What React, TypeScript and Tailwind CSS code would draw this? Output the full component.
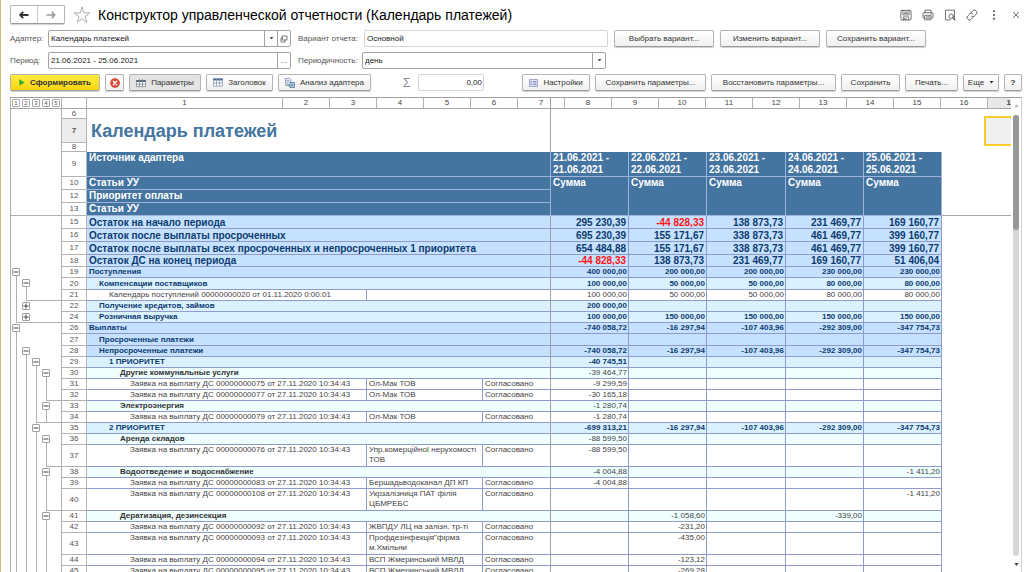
import type { ReactNode } from "react";

type Kind = "total" | "root" | "group" | "sub" | "item";

interface Row {
  n: number;
  h: string;
  kind: Kind;
  indent: 0 | 1 | 2 | 3 | 4;
  text: string;
  tree: string;
  end?: number;
  partner?: string;
  status?: string;
  split?: boolean;
  v: string[];
}

const H11 = "h-[11px]";
const H12 = "h-[12px]";
const H13 = "h-[13px]";
const H22 = "h-[22px]";
const AGREED = "Согласовано";

const order = (id: string) => `Заявка на выплату ДС 00000000${id} от 27.11.2020 10:34:43`;

/* tree: one character per outline level: "-" open node, "+" closed node, "|" running line */
const rows: Row[] = [
  { n: 15, h: H13, kind: "total", indent: 0, tree: "", text: "Остаток на начало периода", v: ["295 230,39", "-44 828,33", "138 873,73", "231 469,77", "169 160,77"] },
  { n: 16, h: H13, kind: "total", indent: 0, tree: "", text: "Остаток после выплаты просроченных", v: ["695 230,39", "155 171,67", "338 873,73", "461 469,77", "399 160,77"] },
  { n: 17, h: H13, kind: "total", indent: 0, tree: "", text: "Остаток после выплаты всех просроченных и непросроченных 1 приоритета", v: ["654 484,88", "155 171,67", "338 873,73", "461 469,77", "399 160,77"] },
  { n: 18, h: H12, kind: "total", indent: 0, tree: "", text: "Остаток ДС на конец периода", v: ["-44 828,33", "138 873,73", "231 469,77", "169 160,77", "51 406,04"] },
  { n: 19, h: H11, kind: "root", indent: 0, tree: "-", text: "Поступления", v: ["400 000,00", "200 000,00", "200 000,00", "230 000,00", "230 000,00"] },
  { n: 20, h: H12, kind: "group", indent: 1, tree: "|-", text: "Компенсации поставщиков", v: ["100 000,00", "50 000,00", "50 000,00", "80 000,00", "80 000,00"] },
  { n: 21, h: H11, kind: "item", indent: 2, tree: "||", end: 1, split: true, text: "Календарь поступлений 00000000020 от 01.11.2020 0:00:01", v: ["100 000,00", "50 000,00", "50 000,00", "80 000,00", "80 000,00"] },
  { n: 22, h: H11, kind: "group", indent: 1, tree: "|+", text: "Получение кредитов, займов", v: ["200 000,00", "", "", "", ""] },
  { n: 24, h: H11, kind: "group", indent: 1, tree: "|+", end: 0, text: "Розничная выручка", v: ["100 000,00", "150 000,00", "150 000,00", "150 000,00", "150 000,00"] },
  { n: 26, h: H11, kind: "root", indent: 0, tree: "-", text: "Выплаты", v: ["-740 058,72", "-16 297,94", "-107 403,96", "-292 309,00", "-347 754,73"] },
  { n: 27, h: H12, kind: "root", indent: 1, tree: "|", text: "Просроченные платежи", v: ["", "", "", "", ""] },
  { n: 28, h: H11, kind: "root", indent: 1, tree: "|-", text: "Непросроченные платежи", v: ["-740 058,72", "-16 297,94", "-107 403,96", "-292 309,00", "-347 754,73"] },
  { n: 29, h: H11, kind: "group", indent: 2, tree: "||-", text: "1 ПРИОРИТЕТ", v: ["-40 745,51", "", "", "", ""] },
  { n: 30, h: H11, kind: "sub", indent: 3, tree: "|||-", text: "Другие коммунальные услуги", v: ["-39 464,77", "", "", "", ""] },
  { n: 31, h: H11, kind: "item", indent: 4, tree: "||||", text: order("075"), partner: "Ол-Мак ТОВ", status: AGREED, v: ["-9 299,59", "", "", "", ""] },
  { n: 32, h: H11, kind: "item", indent: 4, tree: "||||", end: 3, text: order("077"), partner: "Ол-Мак ТОВ", status: AGREED, v: ["-30 165,18", "", "", "", ""] },
  { n: 33, h: H11, kind: "sub", indent: 3, tree: "|||-", text: "Электроэнергия", v: ["-1 280,74", "", "", "", ""] },
  { n: 34, h: H11, kind: "item", indent: 4, tree: "||||", end: 2, text: order("079"), partner: "Ол-Мак ТОВ", status: AGREED, v: ["-1 280,74", "", "", "", ""] },
  { n: 35, h: H11, kind: "group", indent: 2, tree: "||-", text: "2 ПРИОРИТЕТ", v: ["-699 313,21", "-16 297,94", "-107 403,96", "-292 309,00", "-347 754,73"] },
  { n: 36, h: H11, kind: "sub", indent: 3, tree: "|||-", text: "Аренда складов", v: ["-88 599,50", "", "", "", ""] },
  { n: 37, h: H22, kind: "item", indent: 4, tree: "||||", end: 3, text: order("076"), partner: "Упр.комерційної нерухомості ТОВ", status: AGREED, v: ["-88 599,50", "", "", "", ""] },
  { n: 38, h: H11, kind: "sub", indent: 3, tree: "|||-", text: "Водоотведение и водоснабжение", v: ["-4 004,88", "", "", "", "-1 411,20"] },
  { n: 39, h: H11, kind: "item", indent: 4, tree: "||||", text: order("083"), partner: "Бершадьводоканал ДП КП", status: AGREED, v: ["-4 004,88", "", "", "", ""] },
  { n: 40, h: H22, kind: "item", indent: 4, tree: "||||", end: 3, text: order("108"), partner: "Укрзалізниця ПАТ філія ЦБМРЕБС", status: AGREED, v: ["", "", "", "", "-1 411,20"] },
  { n: 41, h: H11, kind: "sub", indent: 3, tree: "|||-", text: "Дератизация, дезинсекция", v: ["", "-1 058,60", "", "-339,00", ""] },
  { n: 42, h: H11, kind: "item", indent: 4, tree: "||||", text: order("092"), partner: "ЖВПДУ ЛЦ на залізн. тр-ті", status: AGREED, v: ["", "-231,20", "", "", ""] },
  { n: 43, h: H22, kind: "item", indent: 4, tree: "||||", text: order("093"), partner: 'Профдезінфекція"фірма м.Хмільни', status: AGREED, v: ["", "-435,00", "", "", ""] },
  { n: 44, h: H11, kind: "item", indent: 4, tree: "||||", text: order("094"), partner: "ВСП Жмеринський МВЛД", status: AGREED, v: ["", "-123,12", "", "", ""] },
  { n: 45, h: H11, kind: "item", indent: 4, tree: "||||", text: order("095"), partner: "ВСП Жмеринський МВЛД", status: AGREED, v: ["", "-269,28", "", "", ""] },
];

const fill: Record<Kind, string> = {
  total: "bg-[#c5e1ff]",
  root: "bg-[#c5e1ff]",
  group: "bg-[#daf1ff]",
  sub: "bg-[#efffff]",
  item: "bg-white",
};

const labelStyle: Record<Kind, string> = {
  total: "text-[10px] font-bold text-[#0d3b70]",
  root: "text-[8px] font-bold text-[#0d3b70]",
  group: "text-[8px] font-bold text-[#0d3b70]",
  sub: "text-[8px] font-bold text-[#333333]",
  item: "text-[8px] text-[#444444]",
};

const valueStyle: Record<Kind, string> = {
  ...labelStyle,
  sub: "text-[8px] text-[#444444]",
};

const indents = ["pl-[2px]", "pl-[12px]", "pl-[22px]", "pl-[33px]", "pl-[43px]"];
const treeEnds = ["ml-[5px]", "ml-[15px]", "ml-[25px]", "ml-[35px]"];
const dates = ["21.06.2021", "22.06.2021", "23.06.2021", "24.06.2021", "25.06.2021"];

/* ---------- icons ---------- */

function Svg({ size = "size-3", children, box = 16 }: { size?: string; children: ReactNode; box?: number }) {
  return (
    <svg className={`${size} shrink-0`} viewBox={`0 0 ${box} ${box}`} fill="none" stroke="currentColor" strokeLinecap="round" strokeLinejoin="round" aria-hidden="true">
      {children}
    </svg>
  );
}

const ArrowLeftIcon = () => (
  <Svg><path d="M14 8H3M7 3.8 2.8 8 7 12.2" strokeWidth="2.4" strokeLinecap="butt" /></Svg>
);
const ArrowRightIcon = () => (
  <Svg><path d="M2 8h11M9 3.8 13.2 8 9 12.2" strokeWidth="2" strokeLinecap="butt" /></Svg>
);
const StarIcon = () => (
  <Svg size="size-[18px]" box={18}><path d="M9 1.3l1.9 5.6h5.9l-4.8 3.6 1.8 5.8L9 12.8l-4.8 3.5L6 10.5 1.2 6.9h5.9z" strokeWidth="0.8" /></Svg>
);
const SaveIcon = () => (
  <Svg>
    <rect x="1.2" y="1.8" width="13.6" height="12.8" rx="1.2" strokeWidth="1.1" />
    <path d="M3.800 2v6h8.400V2M5.500 4h5M5.500 6h5M4.500 14.500v-4h7v4M6.200 12.500v1.800M8 12.500v1.800" strokeWidth="1" />
  </Svg>
);
const PrintIcon = () => (
  <Svg>
    <path d="M4 5V1.500h8V5M4 12H2.600A1.300 1.300 0 0 1 1.300 10.700V6.300A1.300 1.300 0 0 1 2.600 5h10.800a1.300 1.300 0 0 1 1.300 1.300v4.400a1.300 1.300 0 0 1-1.300 1.300H12" strokeWidth="1.1" />
    <path d="M4 8.500h8v6H4zM5.800 10.500h4.400M5.800 12.500h4.400M12 6.800h.8" strokeWidth="1" />
  </Svg>
);
const PreviewIcon = () => (
  <Svg>
    <path d="M8.500 14.500H2V1.500h12V14" strokeWidth="1.1" />
    <circle cx="9.600" cy="9.600" r="3" strokeWidth="1.100" />
    <path d="m11.900 11.900 2.800 2.800" strokeWidth="1.400" />
  </Svg>
);
const LinkIcon = () => (
  <Svg>
    <g strokeWidth="1.2">
      <path d="M6.800 4.700 9.300 2.200a2.700 2.700 0 0 1 3.900 0l.6.6a2.700 2.700 0 0 1 0 3.900L11 9.500a2.700 2.700 0 0 1-3.900 0" />
      <path d="M9.200 11.300 6.700 13.800a2.700 2.700 0 0 1-3.900 0l-.6-.6a2.700 2.700 0 0 1 0-3.900L5 6.500a2.700 2.700 0 0 1 3.900 0" />
    </g>
  </Svg>
);
const DotsIcon = () => (
  <Svg>
    <g fill="currentColor" stroke="none">
      <circle cx="8" cy="3" r="1.400" /><circle cx="8" cy="8" r="1.400" /><circle cx="8" cy="13" r="1.400" />
    </g>
  </Svg>
);
const CloseIcon = () => (
  <Svg><path d="M4.500 4.500l7 7M11.500 4.500l-7 7" strokeWidth="1.200" /></Svg>
);
const CaretIcon = () => (
  <svg className="h-[3px] w-[5px] shrink-0" viewBox="0 0 5 3" fill="currentColor" aria-hidden="true"><path d="M0.500 0h4L2.500 2.500z" /></svg>
);
const OpenIcon = () => (
  <Svg size="size-2"><path d="M5 2h9v8H5zM5 6H2v8h8v-4" strokeWidth="1.500" /></Svg>
);
const PlayIcon = () => (
  <svg className="h-[7px] w-[6px] shrink-0" viewBox="0 0 6 7" aria-hidden="true"><path d="M0.300 0.300 5.700 3.500 0.300 6.700z" fill="#2fae2f" /></svg>
);
const StopIcon = () => (
  <svg className="size-[10px] shrink-0" viewBox="0 0 10 10" aria-hidden="true">
    <circle cx="5" cy="5" r="4.600" fill="#e0493a" stroke="#c03a2e" strokeWidth="0.500" />
    <path d="M3.300 3.300l3.400 3.400M6.700 3.300 3.300 6.700" stroke="#fff" strokeWidth="1.300" strokeLinecap="round" />
  </svg>
);
const ParamsIcon = () => (
  <svg className="h-[10px] w-[10px] shrink-0" viewBox="0 0 11 10" aria-hidden="true">
    <path d="M0.500 2.500h10v6.500h-10z" fill="#fff" stroke="#7c8794" strokeWidth="0.800" />
    <path d="M0.200 1.800h10.600v2H0.200z" fill="#56616e" />
    <path d="M3.800 0.300v9M7.200 0.300v9M0.500 6.300h10" stroke="#7c8794" strokeWidth="0.900" />
  </svg>
);
const HeaderIcon = () => (
  <svg className="h-[9px] w-[10px] shrink-0" viewBox="0 0 11 9" aria-hidden="true">
    <path d="M0.500 0.500h10v8h-10z" fill="#fff" stroke="#7d8fae" strokeWidth="0.800" />
    <path d="M0.200 0.200h10.600v2H0.200z" fill="#4a6690" />
    <path d="M3.800 0.500v8M7.200 0.500v8M0.500 5h10" stroke="#7d8fae" strokeWidth="0.800" />
  </svg>
);
const AnalysisIcon = () => (
  <svg className="size-[10px] shrink-0" viewBox="0 0 10 10" aria-hidden="true">
    <path d="M0.500 0.500h4.200l1.300 1.300v5.700h-5.500z" fill="#e6eef8" stroke="#7189ad" strokeWidth="0.700" />
    <path d="M1.500 2.500h3M1.500 4h3" stroke="#7189ad" strokeWidth="0.600" />
    <path d="M1.800 5.500 5 8.300" stroke="#3d8a4e" strokeWidth="1" />
    <path d="M5 4.500h4.500v5H5z" fill="#c9dcf2" stroke="#3f639a" strokeWidth="0.700" />
    <path d="M6 6.200h2.500M6 7.800h2.500" stroke="#3f639a" strokeWidth="0.700" />
  </svg>
);
const SettingsIcon = () => (
  <svg className="h-[8px] w-[9px] shrink-0" viewBox="0 0 9 8" aria-hidden="true">
    <path d="M0.500 0.500h8v7h-8z" fill="#dfe5f5" stroke="#8b96bd" strokeWidth="0.800" />
    <path d="M1.700 2.800h1.500M1.700 5.200h1.500M4.300 2.800h3M4.300 5.200h3" stroke="#5c6fa8" strokeWidth="1" />
  </svg>
);

/* ---------- controls ---------- */

const buttonBase =
  "flex h-[17px] items-center justify-center gap-[5px] rounded-[2px] border border-[#b4b4b4] border-b-[#9c9c9c] whitespace-nowrap text-[8px] leading-none text-[#333333] shadow-[0_1px_1px_#cfcfcf]";

function Button({ className, children, tone = "bg-linear-to-b from-white to-[#f0f0f0]", label }: { className: string; children: ReactNode; tone?: string; label?: string }) {
  return (
    <button type="button" aria-label={label} className={`${buttonBase} ${tone} ${className}`}>
      {children}
    </button>
  );
}

const fieldBox = "flex h-[17px] overflow-hidden rounded-[2px] border border-[#a3a3a3] bg-white";
const fieldText = "min-w-0 flex-1 appearance-none bg-transparent px-[2px] text-[8px] text-[#222222] outline-none";
const fieldButton = "flex w-[13px] items-center justify-center border-l border-[#a3a3a3] text-[8px] text-[#555555]";

function TitleBar() {
  return (
    <header className="flex h-[19px] items-center">
      <div className="flex h-[19px] w-[55px] rounded-[2px] border border-[#b4b4b4] border-b-[#9c9c9c] shadow-[0_1px_1px_#cfcfcf]">
        <button type="button" aria-label="Назад" className="flex flex-1 items-center justify-center border-r border-[#c8c8c8] text-[#333333]"><ArrowLeftIcon /></button>
        <button type="button" aria-label="Вперед" className="flex flex-1 items-center justify-center text-[#999999]"><ArrowRightIcon /></button>
      </div>
      <button type="button" aria-label="В избранное" className="ml-2 text-[#999999]"><StarIcon /></button>
      <h1 className="ml-[7px] text-[14px] leading-none whitespace-nowrap text-black">Конструктор управленческой отчетности (Календарь платежей)</h1>
      <div className="ml-auto flex gap-[10px] text-[#555555]">
        <button type="button" aria-label="Сохранить"><SaveIcon /></button>
        <button type="button" aria-label="Печать"><PrintIcon /></button>
        <button type="button" aria-label="Просмотр"><PreviewIcon /></button>
        <button type="button" aria-label="Ссылка"><LinkIcon /></button>
        <button type="button" aria-label="Меню"><DotsIcon /></button>
        <button type="button" aria-label="Закрыть"><CloseIcon /></button>
      </div>
    </header>
  );
}

function Fields() {
  return (
    <>
      <div className="mt-[6px] flex items-center text-[8px] text-[#555555]">
        <label htmlFor="adapter" className="w-[38px]">Адаптер:</label>
        <div className={`${fieldBox} w-[243px]`}>
          <div className="flex flex-1">
            <select id="adapter" className={fieldText}>
              <option>Календарь платежей</option>
            </select>
            <span className={`${fieldButton} pointer-events-none`}><CaretIcon /></span>
          </div>
          <button type="button" aria-label="Открыть" className={fieldButton}><OpenIcon /></button>
        </div>
        <label htmlFor="variant" className="ml-[7px] w-[66px]">Вариант отчета:</label>
        <input id="variant" readOnly defaultValue="Основной" className="h-[17px] w-[244px] rounded-[2px] border border-[#d4d4d4] px-[2px] text-[8px] text-[#222222] outline-none" />
        <div className="ml-[6px] flex gap-[6px]">
          <Button className="w-[100px]">Выбрать вариант...</Button>
          <Button className="w-[100px]">Изменить вариант...</Button>
          <Button className="w-[100px]">Сохранить вариант...</Button>
        </div>
      </div>
      <div className="mt-[5px] flex items-center text-[8px] text-[#555555]">
        <label htmlFor="period" className="w-[38px]">Период:</label>
        <div className={`${fieldBox} w-[243px]`}>
          <input id="period" defaultValue="21.06.2021 - 25.06.2021" className={fieldText} />
          <button type="button" aria-label="Выбрать период" className={fieldButton}>...</button>
        </div>
        <label htmlFor="step" className="ml-[7px] w-[64px]">Периодичность:</label>
        <div className={`${fieldBox} w-[244px]`}>
          <select id="step" className={fieldText}>
            <option>день</option>
          </select>
          <span className={`${fieldButton} pointer-events-none`}><CaretIcon /></span>
        </div>
      </div>
    </>
  );
}

function Toolbar() {
  return (
    <div className="mt-[5px] flex items-center gap-[5px]">
      <Button className="w-[90px] font-bold" tone="bg-linear-to-b from-[#ffec3d] to-[#f7d500]"><PlayIcon />Сформировать</Button>
      <Button className="w-[19px]" label="Остановить"><StopIcon /></Button>
      <Button className="w-[72px]" tone="bg-[#e4e4e4]"><ParamsIcon />Параметры</Button>
      <Button className="w-[67px]"><HeaderIcon />Заголовок</Button>
      <Button className="w-[93px]"><AnalysisIcon />Анализ адаптера</Button>
      <label htmlFor="sum" className="ml-[27px] w-[10px] text-[12px] leading-none text-[#888888]">Σ</label>
      <input id="sum" readOnly defaultValue="0,00" className="h-[17px] w-[66px] rounded-[2px] border border-[#d4d4d4] px-[1px] text-right text-[8px] text-[#222222] outline-none" />
      <div className="ml-auto flex gap-[5px]">
        <Button className="w-[68px]"><SettingsIcon />Настройки</Button>
        <Button className="w-[111px]">Сохранить параметры...</Button>
        <Button className="w-[125px]">Восстановить параметры...</Button>
        <Button className="w-[59px]">Сохранить</Button>
        <Button className="w-[53px]">Печать...</Button>
        <Button className="w-[36px]">Еще<CaretIcon /></Button>
        <Button className="w-[18px] font-bold">?</Button>
      </div>
    </div>
  );
}

/* ---------- sheet ---------- */

const rulerCell = "flex shrink-0 items-center justify-center border-r border-[#b0b0b0]";

function Ruler() {
  return (
    <div className="flex h-[11px] overflow-hidden border-b border-[#a8a8a8] bg-white text-[8px] leading-none text-[#444444]">
      <div className={`${rulerCell} w-[51px] gap-[2px]`}>
        {[1, 2, 3, 4, 5].map((level) => (
          <button key={level} type="button" className="flex size-[8px] items-center justify-center rounded-[1px] border border-[#aaaaaa] text-[6px] leading-none text-[#555555]">{level}</button>
        ))}
      </div>
      <div className={`${rulerCell} w-[25px]`} />
      <div className={`${rulerCell} w-[196px]`}>1</div>
      {[2, 3, 4, 5, 6].map((c) => (
        <div key={c} className={`${rulerCell} w-[47px]`}>{c}</div>
      ))}
      <div className={`${rulerCell} relative w-[47px]`}>
        7
        <span className="absolute inset-y-0 left-[32px] w-px bg-[#a0a0a0]" />
      </div>
      {[8, 9, 10, 11, 12, 13, 14, 15, 16].map((c) => (
        <div key={c} className={`${rulerCell} w-[47px]`}>{c}</div>
      ))}
      <div className={`${rulerCell} w-[47px] bg-[#e8e8e8] font-bold`}>17</div>
    </div>
  );
}

function Tree({ tree, end }: { tree: string; end?: number }) {
  return (
    <div className="flex h-full flex-col">
      <div className="flex min-h-0 flex-1">
        {tree.split("").map((mark, i) => (
          <div key={i} className="flex w-[10px] flex-col items-center">
            {mark === "|" && <span className="w-px flex-1 bg-[#b0b0b0]" />}
            {(mark === "-" || mark === "+") && (
              <>
                <button type="button" aria-label={mark === "-" ? "Свернуть" : "Развернуть"} className="mt-[1px] flex size-[8px] shrink-0 items-center justify-center rounded-[1px] border border-[#a0a0a0] bg-white text-[#444444]">
                  <svg className="size-[6px]" viewBox="0 0 6 6" stroke="currentColor" strokeWidth="1" aria-hidden="true">
                    <path d={mark === "-" ? "M0.500 3h5" : "M0.500 3h5M3 0.500v5"} />
                  </svg>
                </button>
                {mark === "-" && <span className="w-px flex-1 bg-[#b0b0b0]" />}
              </>
            )}
          </div>
        ))}
      </div>
      {end !== undefined && <div className={`-mt-px h-px bg-[#b0b0b0] ${treeEnds[end]}`} />}
    </div>
  );
}

const treeCell = "border-r border-[#b0b0b0] p-0";
const numCell = "border-r border-b border-[#b4b4b4] p-0 text-center align-middle text-[8px] leading-[8px] font-normal text-[#555555]";
const headCell = "border-b border-[#9fb2da] bg-[#4474a0] p-0 pl-[2px] text-left align-top text-[10px] leading-[12px] font-bold text-white";
const line = "border-b border-[#8f9bcf]";

function SheetTable() {
  return (
    <table className="w-full table-fixed border-separate border-spacing-0">
      <colgroup>
        <col className="w-[51px]" />
        <col className="w-[25px]" />
        <col className="w-[280px]" />
        <col className="w-[116px]" />
        <col className="w-[68px]" />
        <col className="w-[78px]" />
        <col className="w-[78px]" />
        <col className="w-[79px]" />
        <col className="w-[78px]" />
        <col className="w-[78px]" />
        <col />
      </colgroup>
      <thead>
        <tr>
          <td className={`${treeCell} h-[10px]`} />
          <th className={numCell}>6</th>
          <td colSpan={3} className="border-r border-[#a0a0a0] p-0" />
          <td colSpan={6} className="p-0" />
        </tr>
        <tr>
          <td className={`${treeCell} h-[24px]`} />
          <th className={`${numCell} bg-[#ececec]`}><b>7</b></th>
          <td colSpan={3} className="border-r border-[#a0a0a0] p-0 pl-1 align-middle text-[18px] leading-[20px] font-bold text-[#4474a0]">Календарь платежей</td>
          <td colSpan={6} className="relative p-0">
            <span className="absolute -top-[3px] right-0 h-[30px] w-[27px] border-2 border-r-0 border-[#f5ce2e] bg-[#f0f0f0]" />
          </td>
        </tr>
        <tr>
          <td className={`${treeCell} h-[9px]`} />
          <th className={numCell}>8</th>
          <td colSpan={3} className="border-r border-[#a0a0a0] p-0" />
          <td colSpan={6} className="p-0" />
        </tr>
        <tr>
          <td className={`${treeCell} h-[25px]`} />
          <th className={numCell}>9</th>
          <th colSpan={3} className={`${headCell} border-r`}>Источник адаптера</th>
          {dates.map((d) => (
            <th key={d} className={`${headCell} border-r`}>{d} -<br />{d}</th>
          ))}
          <td className="p-0" />
        </tr>
        <tr>
          <td className={`${treeCell} h-[13px]`} />
          <th className={numCell}>10</th>
          <th colSpan={3} className={`${headCell} border-r`}>Статьи УУ</th>
          {dates.map((d) => (
            <th key={d} rowSpan={3} className={`${headCell} border-r`}>Сумма</th>
          ))}
          <td rowSpan={3} className="border-b border-[#a8a8a8] p-0" />
        </tr>
        <tr>
          <td className={`${treeCell} h-[13px]`} />
          <th className={numCell}>12</th>
          <th colSpan={3} className={`${headCell} border-r`}>Приоритет оплаты</th>
        </tr>
        <tr>
          <td className={`${treeCell} h-[13px] border-b`} />
          <th className={numCell}>13</th>
          <th colSpan={3} className={`${headCell} border-r`}>Статьи УУ</th>
        </tr>
      </thead>
      <tbody>
        {rows.map((r) => {
          const big = r.kind === "total";
          const leading = big ? "leading-[11px]" : "leading-[10px]";
          const valign = r.h === H22 ? "align-top" : "align-bottom";
          const base = `${fill[r.kind]} ${line} p-0 ${valign} ${leading}`;
          const label = `${base} ${labelStyle[r.kind]} ${indents[r.indent]} text-left whitespace-nowrap`;
          const full = !r.partner && !r.split;
          return (
            <tr key={r.n}>
              <td className={`${treeCell} ${r.h}`}><Tree tree={r.tree} end={r.end} /></td>
              <th className={numCell}>{r.n}</th>
              {full ? (
                <td colSpan={3} className={`${label} border-r border-r-[#a0a0a0]`}>{r.text}</td>
              ) : (
                <td className={`${label} border-r`}>{r.text}</td>
              )}
              {r.split && <td colSpan={2} className={`${base} border-r border-r-[#a0a0a0]`} />}
              {r.partner && <td className={`${base} ${labelStyle.item} border-r pl-[2px]`}>{r.partner}</td>}
              {r.partner && <td className={`${base} ${labelStyle.item} border-r border-r-[#a0a0a0] pl-[2px]`}>{r.status}</td>}
              {r.v.map((value, i) => (
                <td
                  key={i}
                  className={`${base} ${valueStyle[r.kind]} border-r text-right whitespace-nowrap ${big ? "pr-[2px]" : "pr-[1px]"}`}
                >
                  {big && value.startsWith("-") ? <span className="text-[#ff1414]">{value}</span> : value}
                </td>
              ))}
              <td className="p-0" />
            </tr>
          );
        })}
      </tbody>
    </table>
  );
}

function Scrollbar() {
  return (
    <div className="flex w-[10px] shrink-0 flex-col items-center py-[6px]">
      <svg className="h-[3px] w-[5px]" viewBox="0 0 5 3" aria-hidden="true"><path d="M2.500 0.300 4.500 3h-4z" fill="#b0b0b0" /></svg>
      <div className="mt-[8px] mb-[7px] w-[6px] flex-1 rounded-full bg-[#d6d6d6]">
        <div className="h-[26%] rounded-full bg-[#989898]" />
      </div>
      <svg className="h-[3px] w-[5px]" viewBox="0 0 5 3" aria-hidden="true"><path d="M0.300 0h4.400L2.500 3z" fill="#444444" /></svg>
    </div>
  );
}

export default function App() {
  return (
    <main className="flex h-screen flex-col overflow-hidden border-l border-[#d3bd74] bg-white pt-[5px] pr-[2px] pl-[9px] font-['Liberation_Sans',Arial,sans-serif]">
      <TitleBar />
      <Fields />
      <Toolbar />
      <section className="mt-[6px] flex min-h-0 flex-1 border-t border-r border-l border-t-[#a0a0a0] border-r-[#d0d0d0] border-l-[#b0b0b0]">
        <div className="min-w-0 flex-1 overflow-hidden">
          <Ruler />
          <SheetTable />
        </div>
        <Scrollbar />
      </section>
    </main>
  );
}
